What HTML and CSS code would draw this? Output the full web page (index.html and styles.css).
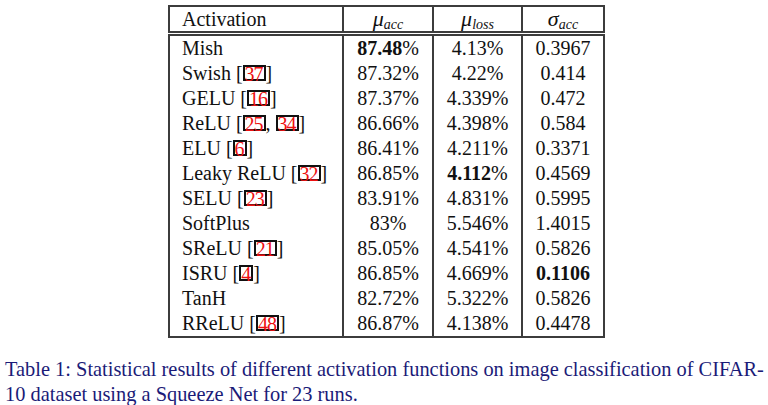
FILE: index.html
```html
<!DOCTYPE html>
<html>
<head>
<meta charset="utf-8">
<link rel="stylesheet" href="styles.css">
</head>
<body>
<div class="page">
  <div class="table-wrap">
    <table class="results">
      <thead>
        <tr>
          <th class="name">Activation</th>
          <th class="c1"><i class="gk">μ</i><sub>acc</sub></th>
          <th class="c2"><i class="gk">μ</i><sub>loss</sub></th>
          <th class="c3"><i class="gk">σ</i><sub>acc</sub></th>
        </tr>
      </thead>
      <tbody>
        <tr><td class="name">Mish</td><td><b>87.48</b>%</td><td>4.13%</td><td>0.3967</td></tr>
        <tr><td class="name">Swish [<span class="cite">37</span>]</td><td>87.32%</td><td>4.22%</td><td>0.414</td></tr>
        <tr><td class="name">GELU [<span class="cite">16</span>]</td><td>87.37%</td><td>4.339%</td><td>0.472</td></tr>
        <tr><td class="name">ReLU [<span class="cite">25</span>, <span class="cite">34</span>]</td><td>86.66%</td><td>4.398%</td><td>0.584</td></tr>
        <tr><td class="name">ELU [<span class="cite">6</span>]</td><td>86.41%</td><td>4.211%</td><td>0.3371</td></tr>
        <tr><td class="name">Leaky ReLU [<span class="cite">32</span>]</td><td>86.85%</td><td><b>4.112</b>%</td><td>0.4569</td></tr>
        <tr><td class="name">SELU [<span class="cite">23</span>]</td><td>83.91%</td><td>4.831%</td><td>0.5995</td></tr>
        <tr><td class="name">SoftPlus</td><td>83%</td><td>5.546%</td><td>1.4015</td></tr>
        <tr><td class="name">SReLU [<span class="cite">21</span>]</td><td>85.05%</td><td>4.541%</td><td>0.5826</td></tr>
        <tr><td class="name">ISRU [<span class="cite">4</span>]</td><td>86.85%</td><td>4.669%</td><td><b>0.1106</b></td></tr>
        <tr><td class="name">TanH</td><td>82.72%</td><td>5.322%</td><td>0.5826</td></tr>
        <tr><td class="name">RReLU [<span class="cite">48</span>]</td><td>86.87%</td><td>4.138%</td><td>0.4478</td></tr>
      </tbody>
    </table>
  </div>
  <p class="caption">Table 1: Statistical results of different activation functions on image classification of CIFAR-<br>10 dataset using a Squeeze Net for 23 runs.</p>
</div>
</body>
</html>
```
FILE: styles.css
```css
html, body {
  margin: 0;
  padding: 0;
  background: #ffffff;
}
.page {
  width: 768px;
  height: 405px;
  font-family: "Liberation Serif", "Times New Roman", serif;
  color: #111111;
}
.table-wrap {
  padding: 5px 0 0 168px;
}
.results {
  border-collapse: collapse;
  font-size: 20px;
}
.results th,
.results td {
  border-left: 2px solid #3c3c3c;
  border-right: 2px solid #3c3c3c;
  padding: 0;
  text-align: center;
  font-weight: normal;
  white-space: nowrap;
}
.results th {
  height: 23px;
  line-height: 23px;
  border-top: 2px solid #3c3c3c;
  border-bottom: 5px double #3c3c3c;
}
.results td {
  height: 25px;
  line-height: 25px;
}
.results tbody tr:last-child td {
  border-bottom: 2px solid #3c3c3c;
}
.results .name {
  text-align: left;
  padding-left: 12px;
  width: 160px;
}
.results .c1 { width: 88px; }
.results .c2 { width: 87px; }
.results .c3 { width: 80px; }
.gk {
  font-style: italic;
  font-size: 22px;
}
sub {
  font-style: italic;
  font-size: 14px;
  vertical-align: -3px;
  line-height: 0;
}
b {
  font-weight: bold;
}
.cite {
  display: inline-block;
  height: 12px;
  line-height: 14px;
  border: 2px solid #111111;
  color: #ee1111;
  letter-spacing: -1px;
  padding: 0 1px 0 0;
  vertical-align: -1px;
  overflow: visible;
}
.caption {
  margin: 0;
  padding: 19px 0 0 5px;
  font-size: 20.4px;
  line-height: 25px;
  color: #1b1b78;
}
```
